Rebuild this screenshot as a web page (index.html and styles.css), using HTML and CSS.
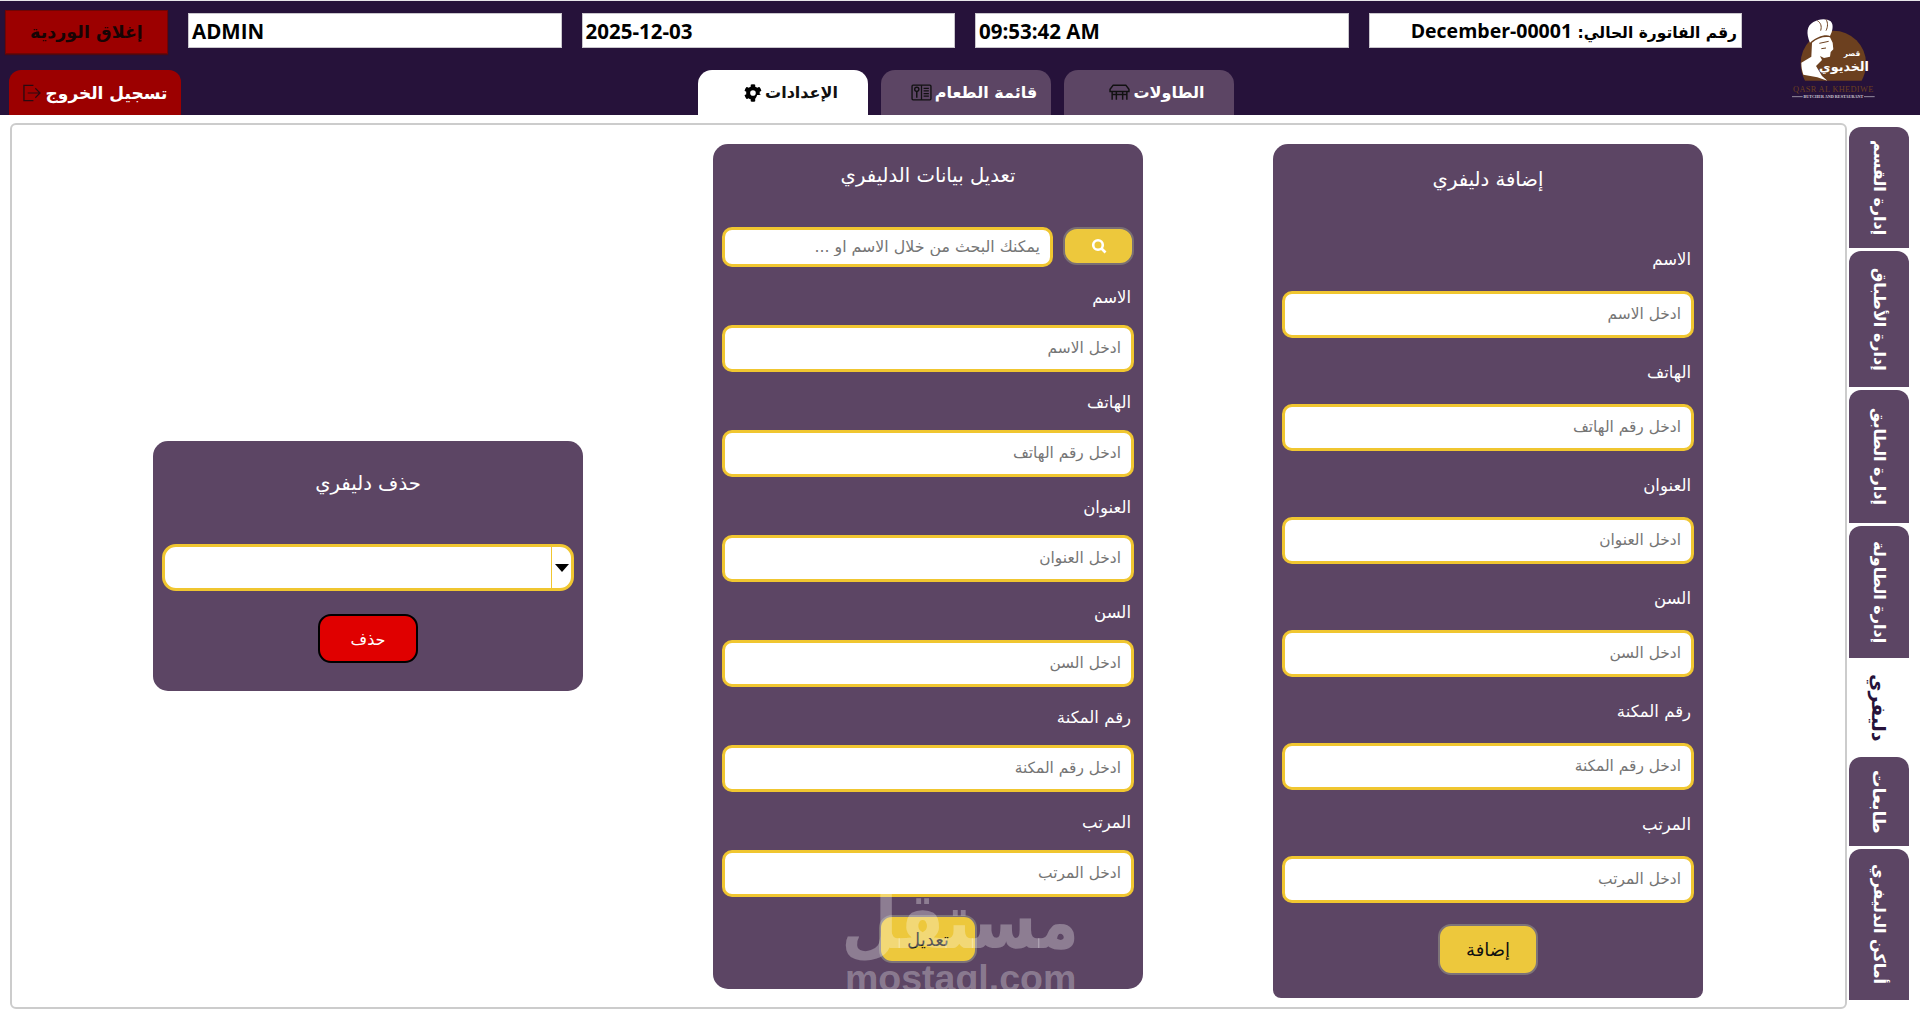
FILE: index.html
```html
<!DOCTYPE html>
<html lang="ar" dir="rtl">
<head>
<meta charset="utf-8">
<title>الإعدادات</title>
<link rel="stylesheet" href="styles.css">
</head>
<body>
<header class="topbar">
  <div class="brand">
    <svg class="logo" viewBox="0 0 420 345" aria-hidden="true">
      <path d="M62 190a98 98 0 0 1 196 0c0 20-5 38-13 52H75c-8-14-13-32-13-52z" fill="#6c401f"/>
      <path d="M90 128c-12-28-10-50 10-62 16-10 40-12 52-2 10 10 6 30-2 44-14-6-40 2-60 20z" fill="#fff"/>
      <path d="M112 62c10 6 14 16 10 30M138 58c6 10 6 22 0 34" stroke="#6c401f" stroke-width="3" fill="none"/>
      <path d="M96 128c16-14 38-20 54-16l8 16 2 20-8 8-2 14-18 4-12-6 6 12-18 18 18 30 16 14-30-10-42-8c-4-12-6-22-6-36l30-18z" fill="#fff"/>
      <path d="M118 130l28-6M124 146l14-2" stroke="#6c401f" stroke-width="3" fill="none"/>
      <text class="logo-ar" x="192" y="212" text-anchor="middle">الخديوي</text>
      <text class="logo-ar-small" x="216" y="168" text-anchor="middle">قصر</text>
      <text class="logo-en" x="160" y="276" text-anchor="middle" direction="ltr">QASR AL KHEDIWE</text>
      <path d="M36 290H68M252 290H284" stroke="#cfc8d2" stroke-width="2"/>
      <text class="logo-sub" x="160" y="294" text-anchor="middle" direction="ltr">BUTCHER AND RESTAURANT</text>
    </svg>
  </div>
  <div class="bar-body">
    <div class="info-row">
      <div class="info-box info-invoice">رقم الفاتورة الحالي: <span class="info-latin">December-00001</span></div>
      <div class="info-box info-ltr">09:53:42 AM</div>
      <div class="info-box info-ltr">2025-12-03</div>
      <div class="info-box info-ltr">ADMIN</div>
      <button class="close-shift" type="button">إغلاق الوردية</button>
    </div>
    <div class="nav-row">
      <nav class="main-tabs">
        <a class="main-tab">الطاولات
          <svg class="tab-icon" viewBox="0 0 20 16" aria-hidden="true"><path d="M4 1h12l3 4v2H1V5z" fill="none" stroke="#111" stroke-width="1.4"/><path d="M3 7v8M7 7v8M13 7v8M17 7v8M3 10h14" stroke="#111" stroke-width="1.4" fill="none"/></svg>
        </a>
        <a class="main-tab">قائمة الطعام
          <svg class="tab-icon" viewBox="0 0 20 16" aria-hidden="true"><rect x="1" y="1" width="18" height="14" rx="1" fill="none" stroke="#111" stroke-width="1.3"/><path d="M10 1v14M12 4h5M12 6.500h5M12 9h5M12 11.500h5" stroke="#111" stroke-width="1.2" fill="none"/><circle cx="5.500" cy="5" r="2" fill="none" stroke="#111" stroke-width="1.300"/><path d="M5.500 7v6" stroke="#111" stroke-width="1.400"/></svg>
        </a>
        <a class="main-tab main-tab-active">الإعدادات
          <svg class="tab-gear" viewBox="0 0 512 512" aria-hidden="true"><path d="M487 315l-42-24a190 190 0 0 0 0-70l42-24c5-3 7-9 5-14a248 248 0 0 0-55-95c-4-4-10-5-15-2l-42 24a187 187 0 0 0-61-35V26c0-6-4-11-9-12a250 250 0 0 0-110 0c-5 1-9 6-9 12v49a193 193 0 0 0-61 35L88 86c-5-3-11-2-15 2a247 247 0 0 0-55 95c-2 5 0 11 5 14l42 24a190 190 0 0 0 0 70l-42 24c-5 3-7 9-5 14a248 248 0 0 0 55 95c4 4 10 5 15 2l42-24a187 187 0 0 0 61 35v49c0 6 4 11 9 12a250 250 0 0 0 110 0c5-1 9-6 9-12v-49a193 193 0 0 0-61-35l42 24c5 3 11 2 15-2a247 247 0 0 0 55-95c2-5 0-11-5-14zM255 336a80 80 0 1 1 0-160 80 80 0 0 1 0 160z" fill="#000"/></svg>
        </a>
      </nav>
      <a class="logout">تسجيل الخروج
        <svg class="logout-icon" viewBox="0 0 19 18" aria-hidden="true"><path d="M11 1H1v16h10" fill="none" stroke="#2a0a10" stroke-width="1.400"/><path d="M5 9h13M13 4l5 5-5 5" fill="none" stroke="#2a0a10" stroke-width="1.200"/></svg>
      </a>
    </div>
  </div>
</header>

<div class="workspace">
  <aside class="side-tabs">
    <a class="side-tab side-t1">إدارة القسم</a>
    <a class="side-tab side-t2">إدارة الأطباق</a>
    <a class="side-tab side-t3">إدارة الطابق</a>
    <a class="side-tab side-t4">إدارة الطاولة</a>
    <a class="side-tab side-t5 side-tab-active">دليفري</a>
    <a class="side-tab side-t6">طابعات</a>
    <a class="side-tab side-t7">أماكن الدليفري</a>
  </aside>
  <main class="frame">
    <section class="card card-add">
      <h2 class="card-title add-title">إضافة دليفري</h2>
      <div class="add-fields">
        <label class="field-label">الاسم</label><input class="field" placeholder="ادخل الاسم">
        <label class="field-label">الهاتف</label><input class="field" placeholder="ادخل رقم الهاتف">
        <label class="field-label">العنوان</label><input class="field" placeholder="ادخل العنوان">
        <label class="field-label">السن</label><input class="field" placeholder="ادخل السن">
        <label class="field-label">رقم المكنة</label><input class="field" placeholder="ادخل رقم المكنة">
        <label class="field-label">المرتب</label><input class="field" placeholder="ادخل المرتب">
      </div>
      <button class="btn btn-yellow btn-add" type="button">إضافة</button>
    </section>

    <section class="card card-edit">
      <h2 class="card-title edit-title">تعديل بيانات الدليفري</h2>
      <div class="search-row">
        <button class="search-btn" type="button" aria-label="بحث">
          <svg viewBox="0 0 16 16" class="search-icon" aria-hidden="true"><circle cx="7" cy="7" r="4.800" fill="none" stroke="#fff" stroke-width="2.600"/><path d="M10.500 10.500L14.500 14.500" stroke="#fff" stroke-width="2.600"/></svg>
        </button>
        <input class="field search-field" placeholder="يمكنك البحث من خلال الاسم او ...">
      </div>
      <div class="edit-fields">
        <label class="field-label">الاسم</label><input class="field" placeholder="ادخل الاسم">
        <label class="field-label">الهاتف</label><input class="field" placeholder="ادخل رقم الهاتف">
        <label class="field-label">العنوان</label><input class="field" placeholder="ادخل العنوان">
        <label class="field-label">السن</label><input class="field" placeholder="ادخل السن">
        <label class="field-label">رقم المكنة</label><input class="field" placeholder="ادخل رقم المكنة">
        <label class="field-label">المرتب</label><input class="field" placeholder="ادخل المرتب">
      </div>
      <button class="btn btn-yellow btn-edit" type="button">تعديل</button>
    </section>

    <section class="card card-delete">
      <h2 class="card-title delete-title">حذف دليفري</h2>
      <div class="select-box">
        <span class="select-arrow"></span>
      </div>
      <button class="btn btn-red" type="button">حذف</button>
    </section>
  </main>
</div>

<div class="watermark">
  <div class="wm-ar">مستقل</div>
  <div class="wm-en" dir="ltr">mostaql.com</div>
</div>
</body>
</html>
```
FILE: styles.css
```css
* { box-sizing: border-box; }
html, body { margin: 0; height: 100%; }
body {
  width: 1920px;
  height: 1017px;
  overflow: hidden;
  background: #fff;
  font-family: "DejaVu Sans", "Open Sans", sans-serif;
  display: flex;
  flex-direction: column;
  position: relative;
}

/* top bar */
.topbar {
  height: 115px;
  background: #26123a;
  border-top: 1px solid #e8e6ea;
  display: flex;
  flex: none;
}
.brand { width: 178px; flex: none; }
.logo { display: block; width: 140px; height: 115px; margin-top: -1px; }
.logo-ar { font-size: 38px; font-weight: 700; fill: #fff; font-family: "DejaVu Sans", sans-serif; }
.logo-ar-small { font-size: 22px; font-weight: 700; fill: #fff; font-family: "DejaVu Sans", sans-serif; }
.logo-en { font-size: 25px; fill: #6c401f; font-family: "Liberation Serif", serif; letter-spacing: 1px; }
.logo-sub { font-size: 12.500px; fill: #cfc8d2; font-family: "Liberation Serif", serif; font-weight: 700; }
.bar-body { flex: 1; display: flex; flex-direction: column; padding: 9px 0 0 5px; }
.info-row { display: flex; align-items: flex-start; gap: 20px; height: 44px; }
.info-box {
  width: 373.500px;
  height: 35px;
  margin-top: 3px;
  background: #fff;
  border: 1px solid #c9c6cc;
  color: #000;
  font-family: "DejaVu Sans", sans-serif;
  font-size: 15.500px;
  font-weight: 700;
  line-height: 34px;
  padding: 0 4px;
  white-space: nowrap;
  flex: none;
}
.info-latin { font-family: "Open Sans", "DejaVu Sans", sans-serif; font-size: 19.500px; }
.info-ltr { font-family: "Open Sans", "DejaVu Sans", sans-serif; font-size: 20.500px; direction: ltr; text-align: left; padding-left: 3px; }
.close-shift {
  width: 163px;
  height: 44px;
  background: #9c0000;
  border: 1px solid #6f0505;
  box-shadow: 0 1px 1px #4d0a12;
  color: #170404;
  font-family: "DejaVu Sans", sans-serif;
  font-size: 17.500px;
  font-weight: 700;
  padding: 0;
  flex: none;
}
.nav-row { display: flex; margin-top: 16px; height: 45px; }
.main-tabs { display: flex; gap: 13px; margin-right: 508px; }
.main-tab {
  width: 170px;
  height: 45px;
  background: #5c4564;
  border-radius: 14px 14px 0 0;
  color: #fff;
  font-size: 16px;
  font-weight: 700;
  display: flex;
  align-items: center;
  justify-content: center;
  gap: 3px;
  padding-left: 16px;
}
.main-tab-active { background: #fff; color: #111; }
.tab-icon { width: 21px; height: 17px; flex: none; }
.tab-gear { width: 18px; height: 18px; flex: none; }
.logout {
  margin-right: auto;
  margin-left: 4px;
  width: 172px;
  height: 45px;
  background: #9c0000;
  border-radius: 12px 12px 0 0;
  color: #fff;
  font-size: 17px;
  font-weight: 700;
  display: flex;
  align-items: center;
  justify-content: center;
  gap: 5px;
  white-space: nowrap;
}
.logout-icon { width: 18px; height: 18px; flex: none; }

/* work area */
.workspace { flex: 1; display: flex; min-height: 0; padding: 8px 11px 8px 10px; gap: 2px; }
.side-tabs { width: 60px; flex: none; display: flex; flex-direction: column; padding-top: 4px; }
.side-tab {
  width: 60px;
  background: #5c4564;
  color: #fff;
  border-radius: 12px 12px 0 0;
  writing-mode: vertical-rl;
  font-size: 16px;
  font-weight: 700;
  display: flex;
  align-items: center;
  justify-content: center;
  white-space: nowrap;
}
.side-t1 { height: 121px; }
.side-t2 { height: 136px; margin-top: 3px; }
.side-t3 { height: 133px; margin-top: 3px; }
.side-t4 { height: 132px; margin-top: 3px; }
.side-t5 { height: 99px; font-size: 19px; }
.side-t6 { height: 89px; font-size: 17.500px; }
.side-t7 { height: 151px; margin-top: 3px; }
.side-tab-active { background: #fff; color: #26123a; border-radius: 0; }

.frame {
  flex: 1;
  border: 2px solid #ccc;
  border-radius: 6px;
  background: #fff;
  display: flex;
  gap: 130px;
  justify-content: center;
  align-items: flex-start;
  padding: 19px 1px 0 0;
  min-width: 0;
}

/* cards */
.card { width: 430px; flex: none; background: #5c4564; border-radius: 15px; padding: 0 9px; color: #fff; }
.card-add { height: 854px; border-radius: 15px 15px 8px 8px; }
.card-edit { height: 845px; }
.card-delete { height: 250px; align-self: center; margin-top: -19px; }
.card-title { margin: 0; text-align: center; font-size: 19.600px; font-weight: 500; color: #fff; display: flex; align-items: center; justify-content: center; }
.add-title { height: 70px; margin-bottom: 11px; }
.edit-title { height: 62px; margin-bottom: 21px; }
.delete-title { height: 84px; margin-bottom: 19px; }

.field-label { display: flex; align-items: center; font-size: 16.500px; color: #fff; padding-right: 3px; padding-top: 2px; }
.add-fields .field-label { height: 66px; }
.edit-fields .field-label { height: 58px; }
.add-fields, .edit-fields { display: flex; flex-direction: column; }
.field {
  display: block;
  width: 100%;
  height: 47px;
  border: 3px solid #f0c630;
  border-radius: 10px;
  background: #fff;
  font-family: "DejaVu Sans", sans-serif;
  font-size: 15.400px;
  padding: 0 10px 2px;
  text-align: right;
  direction: rtl;
  outline: 0;
}
.field::placeholder { color: #757575; opacity: 1; }

.search-row { display: flex; gap: 10px; align-items: flex-start; }
.search-field { height: 40px; flex: 1; width: auto; min-width: 0; font-size: 15.800px; }
.search-btn {
  width: 71px;
  height: 38px;
  background: #edc83c;
  border: 2px solid #7a6f74;
  border-radius: 14px;
  padding: 0;
  display: flex;
  align-items: center;
  justify-content: center;
  flex: none;
}
.search-icon { width: 16px; height: 16px; }

.btn { display: block; margin-left: auto; margin-right: auto; border-radius: 13px; font-family: "DejaVu Sans", sans-serif; font-size: 18px; padding: 0; }
.btn-yellow { background: #edc83c; border: 2px solid #7d7379; color: #111; }
.btn-add { width: 100px; height: 51px; margin-top: 21px; font-weight: 500; }
.btn-edit { width: 98px; height: 48px; margin-top: 18px; }
.btn-red { width: 100px; height: 49px; margin-top: 23px; background: #e00000; border: 2px solid #000; color: #fff; font-weight: 400; font-size: 16px; padding-top: 2px; }

.select-box { height: 47px; border: 3px solid #f0c630; border-radius: 14px; background: #fff; position: relative; }
.select-arrow { display: block; position: absolute; right: 0; top: 0; bottom: 0; width: 20px; border-left: 1px solid #f0c630; }
.select-arrow::after {
  content: "";
  position: absolute;
  top: 17px;
  left: 3px;
  border-left: 7.500px solid transparent;
  border-right: 7.500px solid transparent;
  border-top: 8px solid #000;
}

/* mostaql watermark, over everything */
.watermark {
  position: absolute;
  left: 845px;
  top: 880px;
  width: 230px;
  text-align: center;
  color: rgba(255, 255, 255, .3);
  pointer-events: none;
}
.wm-ar { font-size: 65px; font-weight: 700; line-height: 76px; height: 76px; white-space: nowrap; transform: translate(4px, 8px) scaleY(1.2); transform-origin: 50% 78%; }
.wm-en { font-family: "Liberation Sans", sans-serif; font-size: 37.500px; font-weight: 700; line-height: 44px; white-space: nowrap; }
```
